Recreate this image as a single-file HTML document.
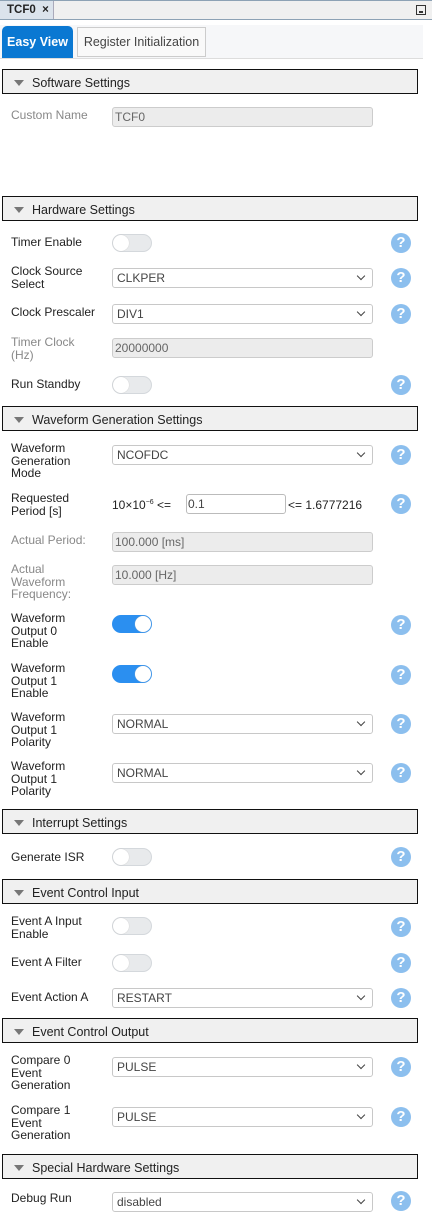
<!DOCTYPE html>
<html><head><meta charset="utf-8"><style>
*{box-sizing:border-box;margin:0;padding:0}
body{width:432px;height:1231px;background:#fff;font-family:"Liberation Sans",sans-serif;font-size:12px;color:#222;position:relative;overflow:hidden}
.a{position:absolute}
.hdr{position:absolute;left:2px;width:416px;height:25px;border:1px solid #111;background:#f0f0f0;font-size:12.5px;line-height:27px;padding-left:29px;color:#222}
.hdr:before{content:"";position:absolute;left:11px;top:10px;border-left:5px solid transparent;border-right:5px solid transparent;border-top:6px solid #777}
.lb{position:absolute;left:11px;line-height:12.5px;font-size:12px}
.g{color:#888}
.inp{position:absolute;left:112px;width:261px;height:20px;border:1px solid #ccc;border-radius:3px;background:#ececec;color:#666;line-height:19px;padding-left:2px;font-size:12px}
.sel{position:absolute;left:112px;width:261px;height:20px;border:1px solid #c8c8c8;border-radius:3px;background:#fff;color:#444;line-height:19px;padding-left:4px;font-size:12px}
.sel:after{content:"";position:absolute;right:8px;top:4px;width:5px;height:5px;border-right:1.6px solid #444;border-bottom:1.6px solid #444;transform:rotate(45deg)}
.tg{position:absolute;left:112px;width:40px;height:18px;border:1px solid #d4d8dc;border-radius:9px;background:#e8eaec}
.tg:before{content:"";position:absolute;left:0;top:0;width:16px;height:16px;border-radius:50%;background:#fff;box-shadow:0 0 1px #bbb}
.tg.on{background:#2b8ff0;border-color:#2b8ff0}
.tg.on:before{left:22px}
.hp{position:absolute;left:391px;width:20px;height:20px;border-radius:50%;background:#8cbfee;color:#fff;font-weight:bold;font-size:15px;line-height:20px;text-align:center}
</style></head><body>
<div class="a" style="left:0;top:0;width:432px;height:20px;background:#f0f0f0;border-top:1px solid #8da2b5;border-bottom:1px solid #8da2b5"></div>
<div class="a" style="left:0;top:1px;width:54px;height:18px;background:#dbe3ec;border-right:1px solid #aab;font-weight:bold;font-size:11.5px;line-height:18px;padding-left:7px">TCF0 &nbsp;×</div>
<div class="a" style="left:416px;top:5px;width:10px;height:10px;border:1px solid #333"><div class="a" style="left:2px;top:5px;width:4px;height:2px;background:#333"></div></div>
<div class="a" style="left:0;top:25px;width:123px;height:34px;background:#f6f7f9;border-bottom:1px solid #ddd"></div>
<div class="a" style="left:123px;top:25px;width:300px;height:34px;background:#f6f7f9;border-bottom:1px solid #ddd"></div>
<div class="a" style="left:2px;top:26px;width:71px;height:32px;background:#0a78d2;border-radius:5px 5px 0 0;color:#fff;font-weight:bold;font-size:12.5px;line-height:32px;text-align:center">Easy View</div>
<div class="a" style="left:77px;top:27px;width:129px;height:30px;background:#f9f9f9;border:1px solid #ccc;color:#444;font-size:12.5px;line-height:28px;text-align:center">Register Initialization</div>

<div class="hdr" style="top:69px">Software Settings</div>
<div class="lb g" style="top:109px">Custom Name</div>
<div class="inp" style="top:107px">TCF0</div>

<div class="hdr" style="top:196px">Hardware Settings</div>
<div class="lb" style="top:236px">Timer Enable</div><div class="tg" style="top:234px"></div><div class="hp" style="top:233px">?</div>
<div class="lb" style="top:265px">Clock Source<br>Select</div><div class="sel" style="top:268px">CLKPER</div><div class="hp" style="top:268px">?</div>
<div class="lb" style="top:306px">Clock Prescaler</div><div class="sel" style="top:304px">DIV1</div><div class="hp" style="top:304px">?</div>
<div class="lb g" style="top:336px">Timer Clock<br>(Hz)</div><div class="inp" style="top:338px">20000000</div>
<div class="lb" style="top:378px">Run Standby</div><div class="tg" style="top:376px"></div><div class="hp" style="top:375px">?</div>

<div class="hdr" style="top:406px">Waveform Generation Settings</div>
<div class="lb" style="top:442px">Waveform<br>Generation<br>Mode</div><div class="sel" style="top:445px">NCOFDC</div><div class="hp" style="top:445px">?</div>
<div class="lb" style="top:492px">Requested<br>Period [s]</div>
<div class="a" style="left:112px;top:498px;font-size:12px">10×10<sup style="font-size:7px">−6</sup> &lt;=</div>
<div class="a" style="left:186px;top:494px;width:100px;height:20px;border:1px solid #bbb;border-radius:3px;line-height:19px;padding-left:1px;color:#444">0.1</div>
<div class="a" style="left:288px;top:498px">&lt;= 1.6777216</div><div class="hp" style="top:494px">?</div>
<div class="lb g" style="top:534px">Actual Period:</div><div class="inp" style="top:532px">100.000 [ms]</div>
<div class="lb g" style="top:563px">Actual<br>Waveform<br>Frequency:</div><div class="inp" style="top:565px">10.000 [Hz]</div>
<div class="lb" style="top:612px">Waveform<br>Output 0<br>Enable</div><div class="tg on" style="top:615px"></div><div class="hp" style="top:615px">?</div>
<div class="lb" style="top:662px">Waveform<br>Output 1<br>Enable</div><div class="tg on" style="top:665px"></div><div class="hp" style="top:665px">?</div>
<div class="lb" style="top:711px">Waveform<br>Output 1<br>Polarity</div><div class="sel" style="top:714px">NORMAL</div><div class="hp" style="top:714px">?</div>
<div class="lb" style="top:760px">Waveform<br>Output 1<br>Polarity</div><div class="sel" style="top:763px">NORMAL</div><div class="hp" style="top:763px">?</div>

<div class="hdr" style="top:809px">Interrupt Settings</div>
<div class="lb" style="top:851px">Generate ISR</div><div class="tg" style="top:848px"></div><div class="hp" style="top:847px">?</div>

<div class="hdr" style="top:879px">Event Control Input</div>
<div class="lb" style="top:915px">Event A Input<br>Enable</div><div class="tg" style="top:917px"></div><div class="hp" style="top:917px">?</div>
<div class="lb" style="top:956px">Event A Filter</div><div class="tg" style="top:954px"></div><div class="hp" style="top:953px">?</div>
<div class="lb" style="top:991px">Event Action A</div><div class="sel" style="top:988px">RESTART</div><div class="hp" style="top:988px">?</div>

<div class="hdr" style="top:1018px">Event Control Output</div>
<div class="lb" style="top:1054px">Compare 0<br>Event<br>Generation</div><div class="sel" style="top:1057px">PULSE</div><div class="hp" style="top:1057px">?</div>
<div class="lb" style="top:1104px">Compare 1<br>Event<br>Generation</div><div class="sel" style="top:1107px">PULSE</div><div class="hp" style="top:1107px">?</div>

<div class="hdr" style="top:1154px">Special Hardware Settings</div>
<div class="lb" style="top:1192px">Debug Run</div><div class="sel" style="top:1192px">disabled</div><div class="hp" style="top:1191px">?</div>
</body></html>
